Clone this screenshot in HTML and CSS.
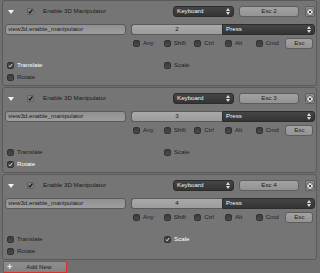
FILE: index.html
```html
<!DOCTYPE html>
<html>
<head>
<meta charset="utf-8">
<link rel="stylesheet" href="styles.css">
</head>
<body>
<div class="list">

  <div class="item">
    <div class="head">
      <svg class="tri" width="6" height="4" viewBox="0 0 6 4"><path d="M0 0H6L3 4Z" fill="#f2f2f2"/></svg>
      <span class="hchk"><svg width="5" height="5" viewBox="0 0 5 5"><path d="M0.6 2.6L2 4L4.4 0.6" fill="none" stroke="#111" stroke-width="1.1"/></svg></span>
      <span class="name">Enable 3D Manipulator</span>
      <span class="menu kb">Keyboard<svg class="ud" width="4" height="7" viewBox="0 0 4 7"><path d="M0 3L2 0L4 3Z M0 4L2 7L4 4Z" fill="#ddd"/></svg></span>
      <span class="btn key">Esc 2</span>
      <span class="xbtn"><svg width="8" height="8" viewBox="0 0 8 8"><circle cx="4" cy="4" r="3.4" fill="#e6e6e6" stroke="#3a3a3a" stroke-width="0.8"/><path d="M2.6 2.6L5.4 5.4M5.4 2.6L2.6 5.4" stroke="#444" stroke-width="1"/></svg></span>
    </div>
    <div class="row1">
      <span class="field idname">view3d.enable_manipulator</span>
      <div class="pair">
        <span class="num">2</span>
        <span class="menu press">Press<svg class="ud" width="4" height="7" viewBox="0 0 4 7"><path d="M0 3L2 0L4 3Z M0 4L2 7L4 4Z" fill="#ddd"/></svg></span>
      </div>
    </div>
    <div class="mods">
      <span class="chk"><i class="box"></i>Any</span>
      <span class="chk"><i class="box"></i>Shift</span>
      <span class="chk"><i class="box"></i>Ctrl</span>
      <span class="chk"><i class="box"></i>Alt</span>
      <span class="chk"><i class="box"></i>Cmd</span>
      <span class="btn esc">Esc</span>
    </div>
    <div class="props">
      <span class="chk on"><i class="box"><svg width="7" height="7" viewBox="0 0 7 7"><path d="M1.2 3.6L2.9 5.3L6 1.2" fill="none" stroke="#fff" stroke-width="1.2"/></svg></i>Translate</span>
      <span class="chk"><i class="box"></i>Scale</span>
      <span class="chk"><i class="box"></i>Rotate</span>
    </div>
  </div>

  <div class="item">
    <div class="head">
      <svg class="tri" width="6" height="4" viewBox="0 0 6 4"><path d="M0 0H6L3 4Z" fill="#f2f2f2"/></svg>
      <span class="hchk"><svg width="5" height="5" viewBox="0 0 5 5"><path d="M0.6 2.6L2 4L4.4 0.6" fill="none" stroke="#111" stroke-width="1.1"/></svg></span>
      <span class="name">Enable 3D Manipulator</span>
      <span class="menu kb">Keyboard<svg class="ud" width="4" height="7" viewBox="0 0 4 7"><path d="M0 3L2 0L4 3Z M0 4L2 7L4 4Z" fill="#ddd"/></svg></span>
      <span class="btn key">Esc 3</span>
      <span class="xbtn"><svg width="8" height="8" viewBox="0 0 8 8"><circle cx="4" cy="4" r="3.4" fill="#e6e6e6" stroke="#3a3a3a" stroke-width="0.8"/><path d="M2.6 2.6L5.4 5.4M5.4 2.6L2.6 5.4" stroke="#444" stroke-width="1"/></svg></span>
    </div>
    <div class="row1">
      <span class="field idname">view3d.enable_manipulator</span>
      <div class="pair">
        <span class="num">3</span>
        <span class="menu press">Press<svg class="ud" width="4" height="7" viewBox="0 0 4 7"><path d="M0 3L2 0L4 3Z M0 4L2 7L4 4Z" fill="#ddd"/></svg></span>
      </div>
    </div>
    <div class="mods">
      <span class="chk"><i class="box"></i>Any</span>
      <span class="chk"><i class="box"></i>Shift</span>
      <span class="chk"><i class="box"></i>Ctrl</span>
      <span class="chk"><i class="box"></i>Alt</span>
      <span class="chk"><i class="box"></i>Cmd</span>
      <span class="btn esc">Esc</span>
    </div>
    <div class="props">
      <span class="chk"><i class="box"></i>Translate</span>
      <span class="chk"><i class="box"></i>Scale</span>
      <span class="chk on"><i class="box"><svg width="7" height="7" viewBox="0 0 7 7"><path d="M1.2 3.6L2.9 5.3L6 1.2" fill="none" stroke="#fff" stroke-width="1.2"/></svg></i>Rotate</span>
    </div>
  </div>

  <div class="item">
    <div class="head">
      <svg class="tri" width="6" height="4" viewBox="0 0 6 4"><path d="M0 0H6L3 4Z" fill="#f2f2f2"/></svg>
      <span class="hchk"><svg width="5" height="5" viewBox="0 0 5 5"><path d="M0.6 2.6L2 4L4.4 0.6" fill="none" stroke="#111" stroke-width="1.1"/></svg></span>
      <span class="name">Enable 3D Manipulator</span>
      <span class="menu kb">Keyboard<svg class="ud" width="4" height="7" viewBox="0 0 4 7"><path d="M0 3L2 0L4 3Z M0 4L2 7L4 4Z" fill="#ddd"/></svg></span>
      <span class="btn key">Esc 4</span>
      <span class="xbtn"><svg width="8" height="8" viewBox="0 0 8 8"><circle cx="4" cy="4" r="3.4" fill="#e6e6e6" stroke="#3a3a3a" stroke-width="0.8"/><path d="M2.6 2.6L5.4 5.4M5.4 2.6L2.6 5.4" stroke="#444" stroke-width="1"/></svg></span>
    </div>
    <div class="row1">
      <span class="field idname">view3d.enable_manipulator</span>
      <div class="pair">
        <span class="num">4</span>
        <span class="menu press">Press<svg class="ud" width="4" height="7" viewBox="0 0 4 7"><path d="M0 3L2 0L4 3Z M0 4L2 7L4 4Z" fill="#ddd"/></svg></span>
      </div>
    </div>
    <div class="mods">
      <span class="chk"><i class="box"></i>Any</span>
      <span class="chk"><i class="box"></i>Shift</span>
      <span class="chk"><i class="box"></i>Ctrl</span>
      <span class="chk"><i class="box"></i>Alt</span>
      <span class="chk"><i class="box"></i>Cmd</span>
      <span class="btn esc">Esc</span>
    </div>
    <div class="props">
      <span class="chk"><i class="box"></i>Translate</span>
      <span class="chk on"><i class="box"><svg width="7" height="7" viewBox="0 0 7 7"><path d="M1.2 3.6L2.9 5.3L6 1.2" fill="none" stroke="#fff" stroke-width="1.2"/></svg></i>Scale</span>
      <span class="chk"><i class="box"></i>Rotate</span>
    </div>
  </div>

  <div class="add"><span class="plus">+</span><span class="addlbl">Add New</span></div>
</div>
</body>
</html>
```
FILE: styles.css
```css
html, body {
  margin: 0;
  padding: 0;
}
body {
  width: 320px;
  height: 273px;
  overflow: hidden;
  background: #707070;
  font-family: "Liberation Sans", Arial, sans-serif;
  font-size: 6.2px;
  line-height: 1;
  color: #1a1a1a;
}
.list {
  padding-left: 2px;
}
.item {
  box-sizing: border-box;
  width: 315px;
  height: 86px;
  margin-bottom: 1px;
  border: 1px solid #5a5a5a;
  border-radius: 3px;
  background: #757575;
  padding: 0 1px 0 2px;
}
.head {
  height: 21px;
  display: flex;
  align-items: center;
}
.tri {
  margin-left: 3px;
  flex: none;
}
.hchk {
  box-sizing: border-box;
  margin-left: 13px;
  width: 7px;
  height: 7px;
  border: 1px solid #626262;
  border-radius: 1px;
  background: #7e7e7e;
  display: flex;
  align-items: center;
  justify-content: center;
  flex: none;
}
.name {
  margin-left: 9px;
  flex: 1;
  color: #1a1a1a;
}
.menu {
  box-sizing: border-box;
  display: flex;
  align-items: center;
  height: 11px;
  background: linear-gradient(#454545, #343434);
  border: 1px solid #2c2c2c;
  color: #f4f4f4;
  padding-left: 3px;
  padding-right: 3px;
}
.menu .ud {
  margin-left: auto;
}
.kb {
  width: 61px;
  border-radius: 3px;
}
.btn {
  box-sizing: border-box;
  display: flex;
  align-items: center;
  justify-content: center;
  height: 11px;
  background: linear-gradient(#a2a2a2, #939393);
  border: 1px solid #5d5d5d;
  border-radius: 3px;
  color: #1a1a1a;
}
.key {
  width: 60px;
  margin-left: 5px;
}
.xbtn {
  box-sizing: border-box;
  width: 10px;
  height: 11px;
  margin-left: 6px;
  border: 1px solid #5d5d5d;
  border-radius: 2px;
  background: #8d8d8d;
  display: flex;
  align-items: center;
  justify-content: center;
}
.row1 {
  margin-top: 2px;
  display: flex;
  height: 11px;
}
.field {
  box-sizing: border-box;
  height: 11px;
  border: 1px solid #5a5a5a;
  border-radius: 3px;
  background: linear-gradient(#909090, #9e9e9e);
  display: flex;
  align-items: center;
  padding-left: 2px;
}
.idname {
  width: 121px;
  color: #1a1a1a;
}
.pair {
  margin-left: 5px;
  display: flex;
  flex: 1;
}
.num {
  box-sizing: border-box;
  width: 91px;
  height: 11px;
  border: 1px solid #5a5a5a;
  border-right: none;
  border-radius: 3px 0 0 3px;
  background: linear-gradient(#a9a9a9, #9c9c9c);
  display: flex;
  align-items: center;
  justify-content: center;
}
.press {
  flex: 1;
  border-radius: 0 3px 3px 0;
}
.mods {
  margin-top: 2px;
  margin-left: 126px;
  height: 12px;
  display: grid;
  grid-template-columns: repeat(6, 1fr);
  align-items: center;
}
.chk {
  display: flex;
  align-items: center;
  padding-left: 2px;
  color: #222;
}
.box {
  box-sizing: border-box;
  width: 7px;
  height: 7px;
  margin-right: 3px;
  border: 1px solid #333;
  border-radius: 2px;
  background: linear-gradient(#3c3c3c, #4a4a4a);
  display: flex;
  align-items: center;
  justify-content: center;
  flex: none;
}
.chk.on {
  color: #fff;
}
.esc {
  margin-left: 1px;
  width: 28px;
}
.props {
  margin-top: 10px;
  display: grid;
  grid-template-columns: 157px 1fr;
  grid-auto-rows: 12px;
  align-items: center;
}
.add {
  box-sizing: border-box;
  margin-top: 1px;
  margin-left: 1px;
  width: 64px;
  height: 12px;
  border: 1px solid #d8302a;
  background: linear-gradient(#8e8e8e, #838383);
  display: flex;
  align-items: center;
  color: #1a1a1a;
}
.plus {
  margin-left: 3px;
  color: #f4f4f4;
  font-size: 9px;
  font-weight: bold;
}
.addlbl {
  margin-left: 14px;
}
```
